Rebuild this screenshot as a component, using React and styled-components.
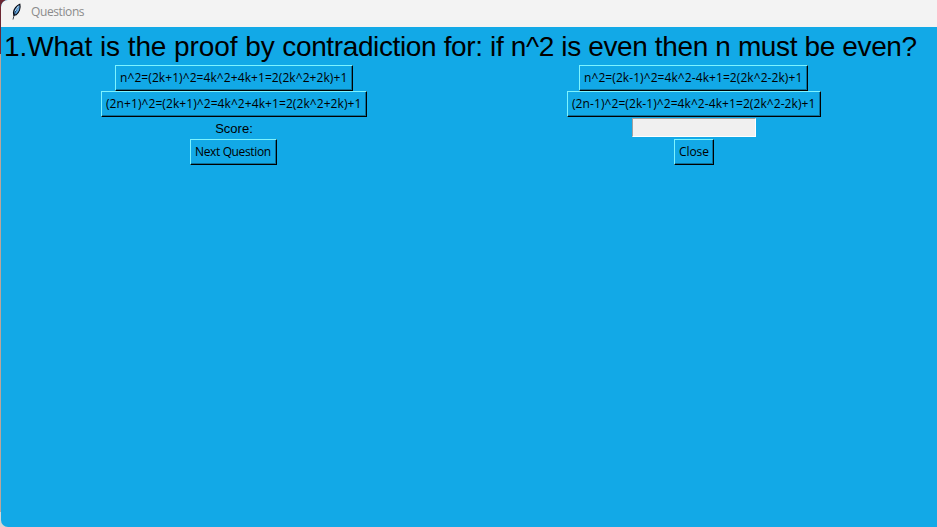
import React from "react";
import styled, { createGlobalStyle } from "styled-components";

const GlobalStyle = createGlobalStyle`
  * { box-sizing: border-box; }
  html, body { margin: 0; height: 100%; overflow: hidden; }
`;

const Desktop = styled.div`
  width: 937px;
  height: 527px;
  padding-left: 1px;
  background: linear-gradient(#6b2733 0 54px, #b9a69c 54px 512px, #d5d5d5 512px);
`;

const AppWindow = styled.main`
  display: flex;
  flex-direction: column;
  height: 527px;
  overflow: hidden;
  border-radius: 7px 0 0 7px;
  background: #12a9e7;
  color: #000;
`;

const TitleBar = styled.header`
  display: flex;
  align-items: center;
  gap: 8px;
  height: 27px;
  padding: 0 0 4px 9px;
  background: #f3f3f3;
  color: #8b8b8b;
  font: 12px/16px "Open Sans", sans-serif;
  letter-spacing: -0.4px;
`;

const Heading = styled.h1`
  margin: 0;
  height: 38px;
  padding-left: 3px;
  font: 400 28px/40px "Liberation Sans", Arial, sans-serif;
  letter-spacing: -0.37px;
  white-space: nowrap;
`;

const LeadIn = styled.span`
  letter-spacing: -0.08px;
`;

const Grid = styled.div`
  display: grid;
  grid-template-columns: 466px 454px;
  grid-template-rows: 26px 26px 22px 26px;
  place-items: center;
`;

const Button = styled.button`
  width: ${(p) => p.$width}px;
  height: 26px;
  margin-right: ${(p) => p.$width % 2}px;
  padding: 0 0 1px 4px;
  border: 1px solid;
  border-color: #7df3ff #000 #000 #7df3ff;
  box-shadow: inset -1px -1px #0c719a;
  background: #12a9e7;
  color: #000;
  text-align: left;
  white-space: nowrap;
  font: 12px/16px "Open Sans", sans-serif;
  letter-spacing: ${(p) => p.$spacing ?? 0.08}px;
`;

const Score = styled.span`
  padding-top: 2px;
  font: 13px/20px "Liberation Sans", Arial, sans-serif;
`;

const Entry = styled.input`
  width: 124px;
  height: 19px;
  margin-bottom: 1px;
  padding: 0 2px;
  outline: 0;
  border: 1px solid;
  border-color: #a0a0a0 #fff #fff #a0a0a0;
  border-radius: 0;
  background: #f0f0f0;
`;

const Feather = () => (
  <svg width="13" height="18" viewBox="0 0 13 18" aria-hidden="true">
    <path d="M9.8 1.2C6.8 2.4 3.5 6 3.5 9.8l.4 2.4 2.4-.6C9 9.5 10.8 5.2 9.8 1.2Z" fill="#64a5df" stroke="#070b14" strokeWidth="1.2" />
    <path d="M8.3 3.5C6.5 6 4.8 9 3 16.5" fill="none" stroke="#101827" strokeWidth=".8" />
    <path d="M8.6 2.8 5 8.2" stroke="#b9dcf5" strokeWidth="1" />
  </svg>
);

export default function App() {
  return (
    <Desktop>
      <GlobalStyle />
      <AppWindow>
        <TitleBar><Feather /><span>Questions</span></TitleBar>
        <Heading><LeadIn>1.What is the proof by </LeadIn>contradiction for: if n^2 is even then n must be even?</Heading>
        <Grid>
          <Button $width={238}>n^2=(2k+1)^2=4k^2+4k+1=2(2k^2+2k)+1</Button>
          <Button $width={229}>n^2=(2k-1)^2=4k^2-4k+1=2(2k^2-2k)+1</Button>
          <Button $width={266}>(2n+1)^2=(2k+1)^2=4k^2+4k+1=2(2k^2+2k)+1</Button>
          <Button $width={254}>(2n-1)^2=(2k-1)^2=4k^2-4k+1=2(2k^2-2k)+1</Button>
          <Score>Score:</Score>
          <Entry aria-label="Score" />
          <Button $width={87} $spacing={-0.36}>Next Question</Button>
          <Button $width={40} $spacing={-0.1}>Close</Button>
        </Grid>
      </AppWindow>
    </Desktop>
  );
}
